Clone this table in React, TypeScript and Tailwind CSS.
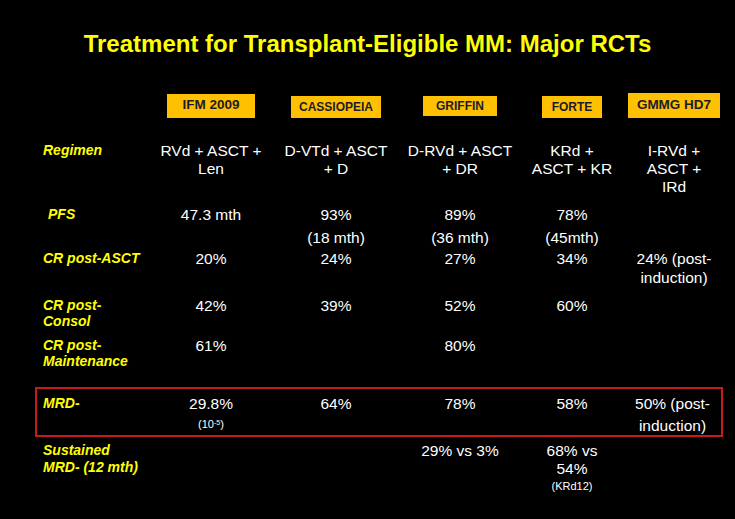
import React from 'react';

const font = { fontFamily: '"Liberation Sans", Arial, sans-serif' };

const grid = 'grid grid-cols-[107px_122px_128px_120px_104px_100px]';
const gridBox = 'grid grid-cols-[107px_122px_128px_120px_104px_1fr]';

const Label: React.FC<{ lines: string[]; className?: string }> = ({ lines, className = '' }) => (
  <div className={`text-[14px] leading-[16px] font-bold italic text-[#ffff00] ${className}`}>
    {lines.map((l, i) => (
      <div key={i}>{l}</div>
    ))}
  </div>
);

const Cell: React.FC<{ lines?: React.ReactNode[]; gap?: string }> = ({ lines = [], gap = 'gap-0' }) => (
  <div className={`flex flex-col items-center text-center text-white text-[15.5px] leading-[18px] ${gap}`}>
    {lines.map((l, i) => (
      <div key={i} className="whitespace-nowrap">{l}</div>
    ))}
  </div>
);

const Badge: React.FC<{ text: string; className: string }> = ({ text, className }) => (
  <div className="flex items-center justify-center">
    <div className={`bg-[#ffc000] text-[#1c1c2a] font-bold flex items-center justify-center ${className}`}>
      {text}
    </div>
  </div>
);

export default function App() {
  return (
    <div className="w-[735px] h-[519px] bg-black overflow-hidden pt-[30px]" style={font}>
      <h1 className="h-[28px] leading-[28px] text-center text-[24px] font-bold text-[#ffff00]">
        Treatment for Transplant-Eligible MM: Major RCTs
      </h1>

      {/* trial headers */}
      <div className={`${grid} pl-[43px] mt-[35px] h-[25px] items-center`}>
        <div />
        <Badge text="IFM 2009" className="w-[88px] h-[24px] text-[13.5px]" />
        <Badge text="CASSIOPEIA" className="w-[90px] h-[22px] text-[12px] mt-[3px]" />
        <Badge text="GRIFFIN" className="w-[74px] h-[20px] text-[12px] mt-[1px]" />
        <Badge text="FORTE" className="w-[60px] h-[22px] text-[12px] mt-[3px]" />
        <Badge text="GMMG HD7" className="w-[92px] h-[25px] text-[13.5px]" />
      </div>

      <div className={`${grid} pl-[43px] mt-[24px] h-[64px]`}>
        <Label lines={['Regimen']} />
        <Cell lines={['RVd + ASCT +', 'Len']} />
        <Cell lines={['D-VTd + ASCT', '+ D']} />
        <Cell lines={['D-RVd + ASCT', '+ DR']} />
        <Cell lines={['KRd +', 'ASCT + KR']} />
        <Cell lines={['I-RVd +', 'ASCT +', 'IRd']} />
      </div>

      <div className={`${grid} pl-[43px] h-[44px]`}>
        <Label lines={['PFS']} className="pl-[5px]" />
        <Cell lines={['47.3 mth']} />
        <Cell lines={['93%', '(18 mth)']} gap="gap-[5px]" />
        <Cell lines={['89%', '(36 mth)']} gap="gap-[5px]" />
        <Cell lines={['78%', '(45mth)']} gap="gap-[5px]" />
        <Cell />
      </div>

      <div className={`${grid} pl-[43px] h-[47px]`}>
        <Label lines={['CR post-ASCT']} />
        <Cell lines={['20%']} />
        <Cell lines={['24%']} />
        <Cell lines={['27%']} />
        <Cell lines={['34%']} />
        <Cell lines={['24% (post-', 'induction)']} gap="gap-[1px]" />
      </div>

      <div className={`${grid} pl-[43px] h-[40px]`}>
        <Label lines={['CR post-', 'Consol']} />
        <Cell lines={['42%']} />
        <Cell lines={['39%']} />
        <Cell lines={['52%']} />
        <Cell lines={['60%']} />
        <Cell />
      </div>

      <div className={`${grid} pl-[43px] h-[50px]`}>
        <Label lines={['CR post-', 'Maintenance']} />
        <Cell lines={['61%']} />
        <Cell />
        <Cell lines={['80%']} />
        <Cell />
        <Cell />
      </div>

      {/* MRD row, boxed */}
      <div className={`${gridBox} ml-[35px] w-[688px] h-[50px] border-2 border-[#cc1a1a] pl-[6px] pt-[6px]`}>
        <Label lines={['MRD-']} />
        <div className="flex flex-col items-center text-white">
          <div className="text-[15.5px] leading-[18px]">29.8%</div>
          <div className="text-[11px] leading-[14px] mt-[4px]">
            (10<sup className="text-[7px]">-5</sup>)
          </div>
        </div>
        <Cell lines={['64%']} />
        <Cell lines={['78%']} />
        <Cell lines={['58%']} />
        <Cell lines={['50% (post-', 'induction)']} gap="gap-[4px]" />
      </div>

      <div className={`${grid} pl-[43px] mt-[5px]`}>
        <Label lines={['Sustained', 'MRD- (12 mth)']} className="leading-[17px]" />
        <Cell />
        <Cell />
        <Cell lines={['29% vs 3%']} />
        <div className="flex flex-col items-center text-white">
          <div className="text-[15.5px] leading-[18px]">68% vs</div>
          <div className="text-[15.5px] leading-[18px]">54%</div>
          <div className="text-[11px] leading-[14px] mt-[1px]">(KRd12)</div>
        </div>
        <Cell />
      </div>
    </div>
  );
}
